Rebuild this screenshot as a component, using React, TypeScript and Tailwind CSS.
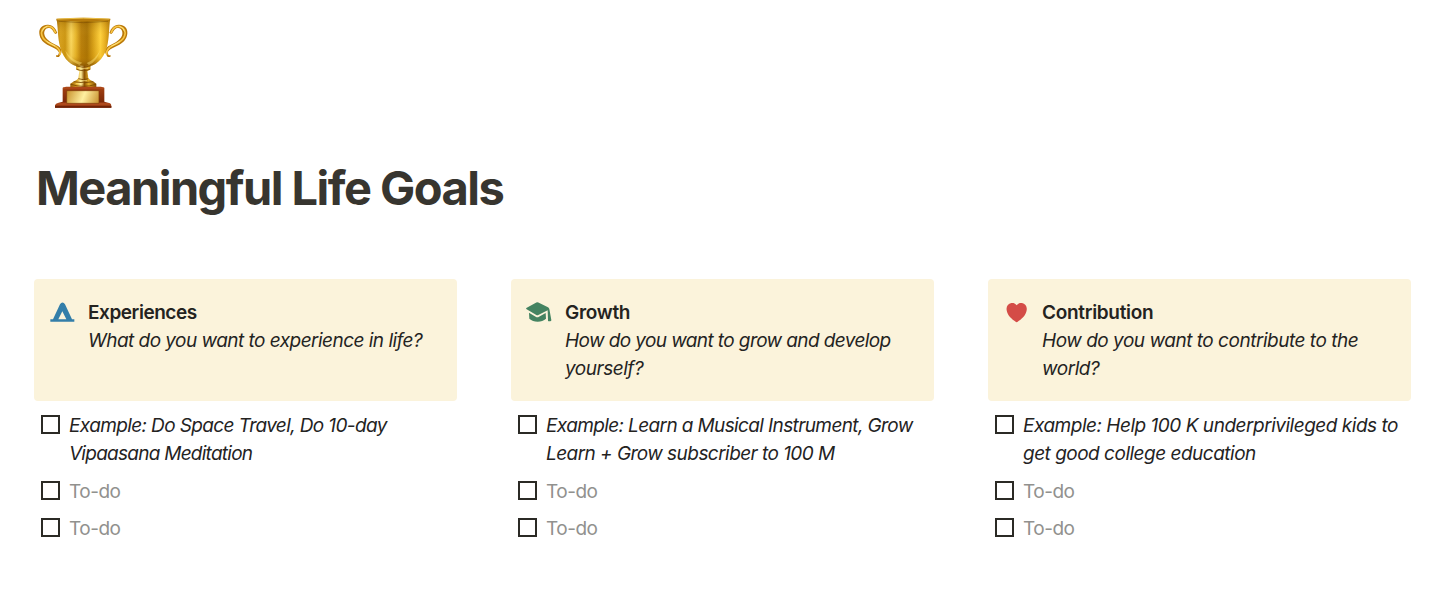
import React from 'react';

interface Line {
  text: string;
  spacing: string;
}

interface Goal {
  title: string;
  titleSpacing: string;
  question: Line[];
  example: Line[];
  icon: React.ReactNode;
}

function TentIcon() {
  return (
    <svg className="h-[30px] w-9" viewBox="0 0 108 90" fill="#337ea9">
      <path d="M19 64H27L48 19Q51 13.500 55.500 13.500Q60 13.500 63 19L84 64H91V71H19ZM43 64H67L55 40Z" fillRule="evenodd" />
    </svg>
  );
}

function GraduationIcon() {
  return (
    <svg className="h-[30px] w-9" viewBox="3 0 108 90" fill="#448361">
      <path d="M19 30L49 13.500Q52 12 55 13.500L84 28Q87 29.500 88 33L94 66Q94.500 70 90 70H86Q83 70 84 66L83 37L55 51Q52 52.500 49 51L20 34Q17 32 19 30Z" />
      <path d="M27 44L47 56Q52 59 57 56L77 45L78 62Q68 71 53 71Q38 71 28 62Z" />
    </svg>
  );
}

function HeartIcon() {
  return (
    <svg className="h-[30px] w-9" viewBox="0 0 108 90" fill="#d44c47">
      <path d="M56 22C61 15 67 14 72 15C82 17 88 25 86 37C84 52 71 64 58 72Q56 73 54 72C41 64 28 52 26 37C24 25 30 17 40 15C45 14 51 15 56 22Z" />
    </svg>
  );
}

function Handle() {
  return (
    <g>
      <path d="M82 75L76 78C70 74 69 65 61 61C49 56 41 67 43 79C45 92 58 101 74 109C90 116 97 124 94 135L87 147H79L78 142H84L87 134C84 124 70 119 58 113C41 105 30 94 28 77C26 60 38 49 54 50C69 51 77 61 82 75Z" fill="#b97809" />
      <path d="M76 73C71 61 61 53 49 56C37 60 32 71 36 83C41 99 58 106 71 112C84 119 92 126 90 139" stroke="#f7c443" strokeWidth="5" strokeLinecap="round" />
      <path d="M37 69Q40 57 51 55M51 101Q65 109 75 114" stroke="#fff0a0" strokeWidth="2" strokeLinecap="round" />
    </g>
  );
}

function Trophy() {
  return (
    <svg className="h-[110px] w-[110px]" viewBox="0 0 330 330" fill="none">
      <defs>
        <linearGradient id="cup" x1="80" x2="240" y1="0" y2="0" gradientUnits="userSpaceOnUse">
          <stop offset="0" stopColor="#b57906" />
          <stop offset=".07" stopColor="#d29b18" />
          <stop offset=".16" stopColor="#c8910e" />
          <stop offset=".27" stopColor="#f9d760" />
          <stop offset=".36" stopColor="#e5b329" />
          <stop offset=".46" stopColor="#b37806" />
          <stop offset=".57" stopColor="#a46d00" />
          <stop offset=".68" stopColor="#d29a13" />
          <stop offset=".82" stopColor="#ffd13c" />
          <stop offset=".91" stopColor="#e5ab1c" />
          <stop offset="1" stopColor="#b77c05" />
        </linearGradient>
        <linearGradient id="shade" x1="0" x2="0" y1="35" y2="175" gradientUnits="userSpaceOnUse">
          <stop offset="0" stopColor="#875600" stopOpacity=".35" />
          <stop offset=".35" stopColor="#ffd95b" stopOpacity=".08" />
          <stop offset=".78" stopColor="#d59810" stopOpacity=".15" />
          <stop offset="1" stopColor="#7c4a00" stopOpacity=".75" />
        </linearGradient>
        <linearGradient id="stem" x1="122" x2="199" y1="0" y2="0" gradientUnits="userSpaceOnUse">
          <stop stopColor="#9b6205" />
          <stop offset=".25" stopColor="#e3ad2b" />
          <stop offset=".4" stopColor="#fff0a0" />
          <stop offset=".53" stopColor="#8b5000" />
          <stop offset=".7" stopColor="#e4ae28" />
          <stop offset="1" stopColor="#824b00" />
        </linearGradient>
        <linearGradient id="plate" x1="110" x2="208" y1="250" y2="289" gradientUnits="userSpaceOnUse">
          <stop stopColor="#c9932e" />
          <stop offset=".5" stopColor="#fff0a0" />
          <stop offset="1" stopColor="#c58b28" />
        </linearGradient>
        <linearGradient id="wood" x1="0" x2="0" y1="236" y2="300" gradientUnits="userSpaceOnUse">
          <stop stopColor="#a54212" />
          <stop offset=".7" stopColor="#7d2909" />
          <stop offset=".8" stopColor="#b24b1d" />
          <stop offset="1" stopColor="#782504" />
        </linearGradient>
      </defs>
      <Handle />
      <g transform="translate(320 0) scale(-1 1)"><Handle /></g>
      <path d="M80 36H240C237 55 238 82 233 107C227 145 204 168 179 175H141C116 168 95 145 88 107C83 82 84 55 80 36Z" fill="url(#cup)" />
      <path d="M80 36H240C237 55 238 82 233 107C227 145 204 168 179 175H141C116 168 95 145 88 107C83 82 84 55 80 36Z" fill="url(#shade)" />
      <path d="M79 32Q160 26 241 32V37Q160 43 79 37Z" fill="#b77b0b" />
      <path d="M82 33Q160 28 238 33" stroke="#f5ce57" strokeWidth="2.5" />
      <path d="M86 40Q160 48 234 40" stroke="#754700" strokeOpacity=".5" strokeWidth="3" />
      <path d="M105 127Q126 159 157 164L148 171Q114 157 105 127ZM211 125Q197 154 170 165L177 171Q202 158 211 125Z" fill="#ffe478" fillOpacity=".45" />
      <path d="M138 173H182L181 185L172 189L175 211Q179 217 191 221L199 227V237H121V227L130 221Q142 217 145 211L148 189L139 185Z" fill="url(#stem)" />
      <path d="M139 174Q160 182 181 174M139 183Q160 193 181 183M145 212Q160 218 175 212M131 221Q160 228 190 221M122 229Q160 241 198 229" stroke="#784500" strokeWidth="2.5" />
      <path d="M145 181H174M147 218H171M137 227H160" stroke="#ffe789" strokeWidth="2" />
      <path d="M98 239L108 236H213L223 239V281L240 286Q244 288 244 294V299H75V292Q76 286 86 284L98 281Z" fill="url(#wood)" />
      <path d="M99 240H221M83 288H238" stroke="#b54e20" strokeWidth="3" />
      <path d="M110 248H207V286H110Z" fill="url(#plate)" stroke="#7d3b08" strokeWidth="2" />
      <path d="M75 294H244V299H75Z" fill="#702307" />
    </svg>
  );
}

const goals: Goal[] = [
  {
    title: 'Experiences',
    titleSpacing: 'tracking-[-0.45px]',
    question: [{ text: 'What do you want to experience in life?', spacing: 'tracking-[-0.53px]' }],
    example: [
      { text: 'Example: Do Space Travel, Do 10-day', spacing: 'tracking-[-0.62px]' },
      { text: 'Vipaasana Meditation', spacing: 'tracking-[-0.74px]' },
    ],
    icon: <TentIcon />,
  },
  {
    title: 'Growth',
    titleSpacing: 'tracking-[-0.3px]',
    question: [
      { text: 'How do you want to grow and develop', spacing: 'tracking-[-0.6px]' },
      { text: 'yourself?', spacing: 'tracking-[-0.48px]' },
    ],
    example: [
      { text: 'Example: Learn a Musical Instrument, Grow', spacing: 'tracking-[-0.62px]' },
      { text: 'Learn + Grow subscriber to 100 M', spacing: 'tracking-[-0.55px]' },
    ],
    icon: <GraduationIcon />,
  },
  {
    title: 'Contribution',
    titleSpacing: 'tracking-[-0.3px]',
    question: [
      { text: 'How do you want to contribute to the', spacing: 'tracking-[-0.48px]' },
      { text: 'world?', spacing: 'tracking-[-0.48px]' },
    ],
    example: [
      { text: 'Example: Help 100 K underprivileged kids to', spacing: 'tracking-[-0.48px]' },
      { text: 'get good college education', spacing: 'tracking-[-0.5px]' },
    ],
    icon: <HeartIcon />,
  },
];

function Lines({ lines }: { lines: Line[] }) {
  return (
    <div className="whitespace-nowrap italic">
      {lines.map((line) => <div key={line.text} className={line.spacing}>{line.text}</div>)}
    </div>
  );
}

function Todo({ lines }: { lines?: Line[] }) {
  return (
    <div className="flex gap-[9px] pl-[7px]">
      <div className="mt-[3px] h-[19px] w-[19px] shrink-0 border-2 border-[#2b2a25]" />
      {lines ? (
        <Lines lines={lines} />
      ) : (
        <div className="tracking-[-0.5px] text-[#91918e]">To-do</div>
      )}
    </div>
  );
}

export default function App() {
  return (
    <main className="h-[594px] overflow-hidden bg-white pl-[34px] pt-2 font-['Inter',sans-serif] text-[19px] leading-7 text-[#24231f]">
      <div className="-ml-1"><Trophy /></div>
      <h1 className="mt-[38px] h-16 whitespace-nowrap pl-[2px] text-[47px] font-bold leading-[64px] tracking-[-1.53px] text-[#37352f]">
        Meaningful Life Goals
      </h1>
      <div className="mt-[59px] flex gap-[54px]">
        {goals.map((goal) => (
          <section key={goal.title} className="w-[423px] shrink-0">
            <div className="flex h-[122px] rounded bg-[#fbf3db] pl-[10px] pt-[19px]">
              <div className="w-11 shrink-0">{goal.icon}</div>
              <div className="pt-px">
                <h2 className={`font-semibold ${goal.titleSpacing}`}>{goal.title}</h2>
                <Lines lines={goal.question} />
              </div>
            </div>
            <div className="mt-[11px] flex flex-col gap-[9.5px]">
              <Todo lines={goal.example} />
              <Todo />
              <Todo />
            </div>
          </section>
        ))}
      </div>
    </main>
  );
}
